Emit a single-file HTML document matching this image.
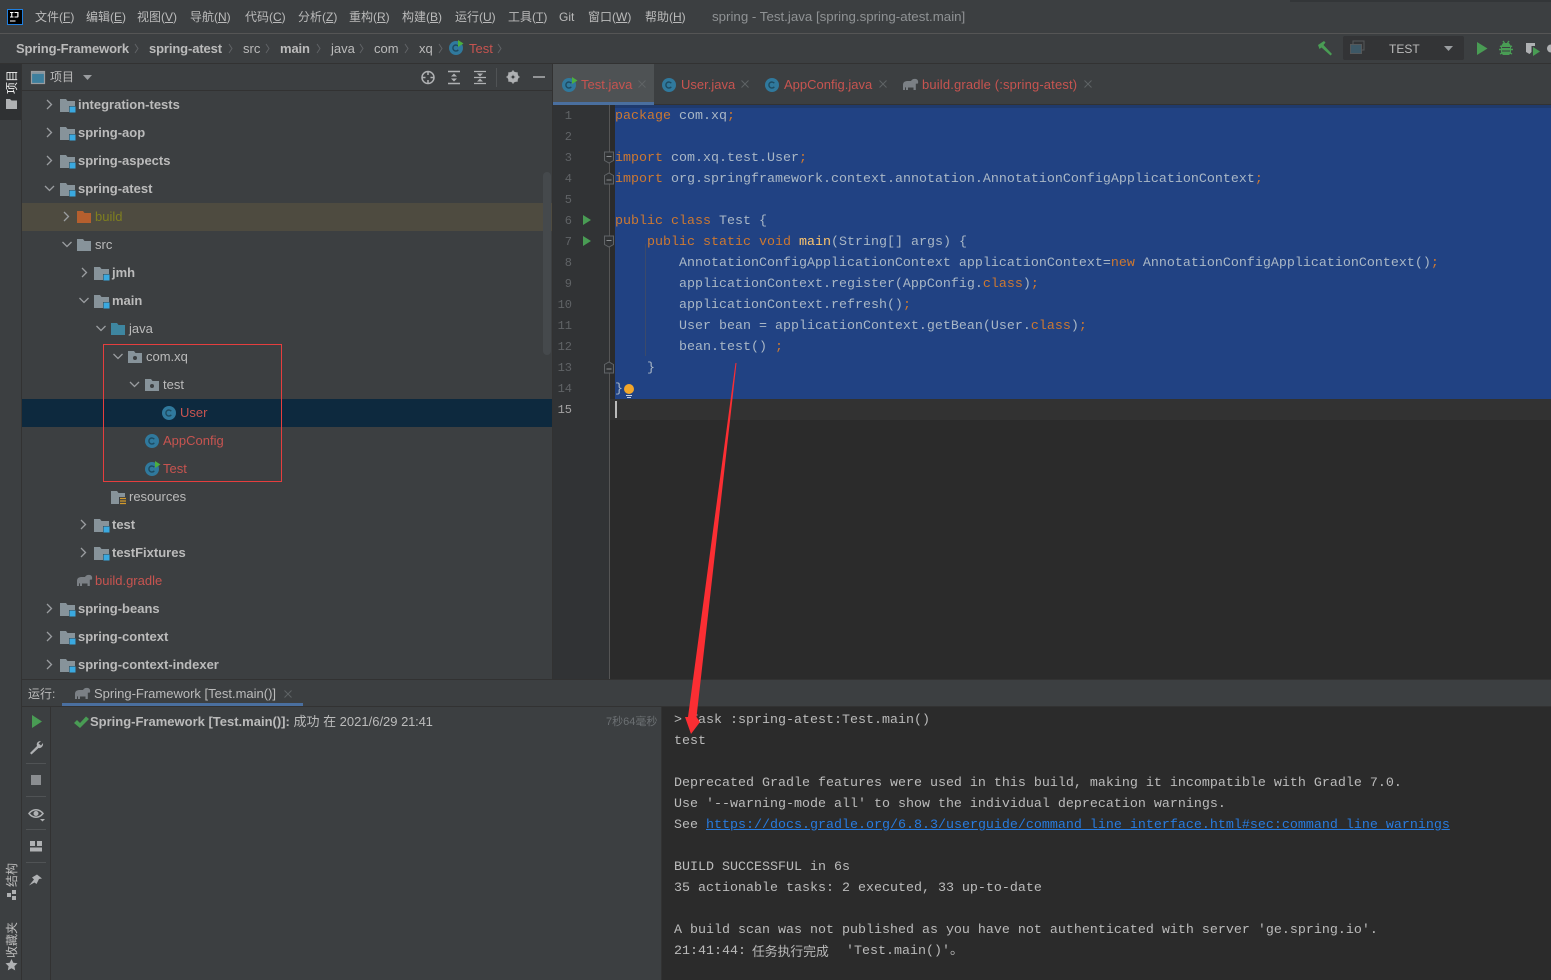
<!DOCTYPE html>
<html><head><meta charset="utf-8"><style>
html,body{margin:0;padding:0;background:#3c3f41}
body{position:relative;width:1551px;height:980px;overflow:hidden;font-family:"Liberation Sans","Noto Sans CJK SC",sans-serif;font-size:13px;color:#bbb}
.b{position:absolute}
.t{position:absolute;white-space:pre;line-height:18px;height:18px}
.m{font-size:12px;color:#bbb}
.bc{top:40px;font-size:13px;color:#bbb}
.bd{font-weight:bold}
.bc.bd{letter-spacing:-.12px}
.r{color:#c75450}
.tr{font-size:13px;margin-top:1px}
.tb{font-size:13px}
.c{position:absolute;left:0;white-space:pre;font-family:"Liberation Mono","Noto Sans CJK SC",monospace;font-size:13.33px;line-height:21px;height:21px;color:#a9b7c6;margin-top:1px}
.k{color:#cc7832}
.o{position:absolute;white-space:pre;font-family:"Liberation Mono","Noto Sans CJK SC",monospace;font-size:13.33px;line-height:21px;height:21px;color:#bbb;left:674px;margin-top:1px}
.n{position:absolute;left:549px;width:23px;text-align:right;font-family:"Liberation Mono",monospace;font-size:12px;line-height:21px;color:#606366;margin-top:1px}
.v{position:absolute;white-space:pre;transform:rotate(-90deg);transform-origin:center;font-size:12px;line-height:14px;color:#bbb}
</style></head><body>
<!-- backgrounds -->
<div class="b" style="left:0;top:33px;width:1551px;height:1px;background:#555"></div>
<div class="b" style="left:0;top:63px;width:1551px;height:1px;background:#323232"></div>
<div class="b" style="left:1290px;top:0;width:261px;height:2px;background:#333638"></div>
<div class="b" style="left:21px;top:64px;width:1px;height:916px;background:#323232"></div>
<div class="b" style="left:0;top:64px;width:21px;height:56px;background:#2f3133"></div>
<div class="b" style="left:22px;top:90px;width:531px;height:1px;background:#323232"></div>
<div class="b" style="left:22px;top:203px;width:531px;height:28px;background:#4e4b40"></div>
<div class="b" style="left:22px;top:399px;width:531px;height:28px;background:#0d293e"></div>
<div class="b" style="left:543px;top:172px;width:8px;height:183px;background:#45494c;border-radius:4px"></div>
<div class="b" style="left:552px;top:64px;width:1px;height:616px;background:#323232"></div>
<!-- tabs -->
<div class="b" style="left:553px;top:64px;width:101px;height:38px;background:#4e5254"></div>
<div class="b" style="left:553px;top:102px;width:101px;height:3px;background:#4a6f9f"></div>
<div class="b" style="left:654px;top:104px;width:897px;height:1px;background:#323232"></div>
<!-- editor -->
<div class="b" style="left:553px;top:105px;width:57px;height:575px;background:#313335"></div>
<div class="b" style="left:609px;top:105px;width:1px;height:575px;background:#555"></div>
<div class="b" style="left:610px;top:105px;width:941px;height:575px;background:#2b2b2b"></div>
<div class="b" style="top:105px;height:3px;background:#1f3a6d;left:615px;width:936px"></div>
<div class="b" style="left:615px;top:108px;width:936px;height:291px;background:#214283"></div>
<div class="b" style="left:610px;top:399px;width:941px;height:21px;background:#323232"></div>
<div class="b" style="left:615px;top:401px;width:2px;height:17px;background:#bbb"></div>
<div class="b" style="left:645px;top:244px;width:1px;height:112px;background:#3b4a6b"></div>
<!-- run panel -->
<div class="b" style="left:22px;top:679px;width:1529px;height:1px;background:#323232"></div>
<div class="b" style="left:22px;top:706px;width:1529px;height:1px;background:#323232"></div>
<div class="b" style="left:62px;top:703px;width:241px;height:3px;background:#4a6f9f"></div>
<div class="b" style="left:50px;top:707px;width:1px;height:273px;background:#323232"></div>
<div class="b" style="left:661px;top:707px;width:1px;height:273px;background:#323232"></div>
<div class="b" style="left:662px;top:707px;width:889px;height:273px;background:#2b2b2b"></div>
<div class="b" style="left:1343px;top:36px;width:121px;height:24px;background:#333436;border-radius:2px"></div>

<!-- menu -->
<span class="t m" style="left:35px;top:8px">文件(<u>F</u>)</span>
<span class="t m" style="left:86px;top:8px">编辑(<u>E</u>)</span>
<span class="t m" style="left:137px;top:8px">视图(<u>V</u>)</span>
<span class="t m" style="left:190px;top:8px">导航(<u>N</u>)</span>
<span class="t m" style="left:245px;top:8px">代码(<u>C</u>)</span>
<span class="t m" style="left:298px;top:8px">分析(<u>Z</u>)</span>
<span class="t m" style="left:349px;top:8px">重构(<u>R</u>)</span>
<span class="t m" style="left:402px;top:8px">构建(<u>B</u>)</span>
<span class="t m" style="left:455px;top:8px">运行(<u>U</u>)</span>
<span class="t m" style="left:508px;top:8px">工具(<u>T</u>)</span>
<span class="t m" style="left:559px;top:8px">Git</span>
<span class="t m" style="left:588px;top:8px">窗口(<u>W</u>)</span>
<span class="t m" style="left:645px;top:8px">帮助(<u>H</u>)</span>
<span class="t m" style="left:712px;top:8px;color:#8f9294;font-size:13.3px">spring - Test.java [spring.spring-atest.main]</span>

<!-- breadcrumb -->
<span class="t bc bd" style="left:16px">Spring-Framework</span>
<span class="t bc bd" style="left:149px">spring-atest</span>
<span class="t bc" style="left:243px">src</span>
<span class="t bc bd" style="left:280px">main</span>
<span class="t bc" style="left:331px">java</span>
<span class="t bc" style="left:374px">com</span>
<span class="t bc" style="left:419px">xq</span>
<span class="t bc r" style="left:469px">Test</span>
<span class="t" style="left:1389px;top:40px;font-size:12px">TEST</span>

<!-- project toolbar -->
<span class="t" style="left:50px;top:68px;font-size:12px">项目</span>

<!-- tree -->
<span class="t tr bd" style="left:78px;top:95px">integration-tests</span>
<span class="t tr bd" style="left:78px;top:123px">spring-aop</span>
<span class="t tr bd" style="left:78px;top:151px">spring-aspects</span>
<span class="t tr bd" style="left:78px;top:179px">spring-atest</span>
<span class="t tr" style="left:95px;top:207px;color:#7f7f1f">build</span>
<span class="t tr" style="left:95px;top:235px">src</span>
<span class="t tr bd" style="left:112px;top:263px">jmh</span>
<span class="t tr bd" style="left:112px;top:291px">main</span>
<span class="t tr" style="left:129px;top:319px">java</span>
<span class="t tr" style="left:146px;top:347px">com.xq</span>
<span class="t tr" style="left:163px;top:375px">test</span>
<span class="t tr r" style="left:180px;top:403px">User</span>
<span class="t tr r" style="left:163px;top:431px">AppConfig</span>
<span class="t tr r" style="left:163px;top:459px">Test</span>
<span class="t tr" style="left:129px;top:487px">resources</span>
<span class="t tr bd" style="left:112px;top:515px">test</span>
<span class="t tr bd" style="left:112px;top:543px">testFixtures</span>
<span class="t tr r" style="left:95px;top:571px">build.gradle</span>
<span class="t tr bd" style="left:78px;top:599px">spring-beans</span>
<span class="t tr bd" style="left:78px;top:627px">spring-context</span>
<span class="t tr bd" style="left:78px;top:655px">spring-context-indexer</span>

<!-- editor tabs -->
<span class="t tb r" style="left:581px;top:76px">Test.java</span>
<span class="t tb r" style="left:681px;top:76px">User.java</span>
<span class="t tb r" style="left:784px;top:76px">AppConfig.java</span>
<span class="t tb r" style="left:922px;top:76px;letter-spacing:.15px">build.gradle (:spring-atest)</span>

<!-- line numbers -->
<div class="n" style="top:105px">1</div>
<div class="n" style="top:126px">2</div>
<div class="n" style="top:147px">3</div>
<div class="n" style="top:168px">4</div>
<div class="n" style="top:189px">5</div>
<div class="n" style="top:210px">6</div>
<div class="n" style="top:231px">7</div>
<div class="n" style="top:252px">8</div>
<div class="n" style="top:273px">9</div>
<div class="n" style="top:294px">10</div>
<div class="n" style="top:315px">11</div>
<div class="n" style="top:336px">12</div>
<div class="n" style="top:357px">13</div>
<div class="n" style="top:378px">14</div>
<div class="n" style="top:399px;color:#a4a3a3">15</div>

<!-- code -->
<div class="b" style="left:615px;top:0">
<div class="c" style="top:105px"><span class="k">package</span> com.xq<span class="k">;</span></div>
<div class="c" style="top:147px"><span class="k">import</span> com.xq.test.User<span class="k">;</span></div>
<div class="c" style="top:168px"><span class="k">import</span> org.springframework.context.annotation.AnnotationConfigApplicationContext<span class="k">;</span></div>
<div class="c" style="top:210px"><span class="k">public class</span> Test {</div>
<div class="c" style="top:231px">    <span class="k">public static void</span> <span style="color:#ffc66d">main</span>(String[] args) {</div>
<div class="c" style="top:252px">        AnnotationConfigApplicationContext applicationContext=<span class="k">new</span> AnnotationConfigApplicationContext()<span class="k">;</span></div>
<div class="c" style="top:273px">        applicationContext.register(AppConfig.<span class="k">class</span>)<span class="k">;</span></div>
<div class="c" style="top:294px">        applicationContext.refresh()<span class="k">;</span></div>
<div class="c" style="top:315px">        User bean = applicationContext.getBean(User.<span class="k">class</span>)<span class="k">;</span></div>
<div class="c" style="top:336px">        bean.test() <span class="k">;</span></div>
<div class="c" style="top:357px">    }</div>
<div class="c" style="top:378px">}</div>
</div>

<!-- run -->
<span class="t" style="left:28px;top:685px;font-size:12px">运行:</span>
<span class="t" style="left:94px;top:685px;font-size:13px">Spring-Framework [Test.main()]</span>
<span class="t" style="left:90px;top:713px;font-size:13px"><b>Spring-Framework [Test.main()]:</b> 成功 在 2021/6/29 <span style="letter-spacing:-.2px">21:41</span></span>
<span class="t" style="left:606px;top:713px;font-size:11px;color:#6c7073">7秒64毫秒</span>

<!-- console -->
<div class="o" style="top:709px">&gt; Task :spring-atest:Test.main()</div>
<div class="o" style="top:730px">test</div>
<div class="o" style="top:772px">Deprecated Gradle features were used in this build, making it incompatible with Gradle 7.0.</div>
<div class="o" style="top:793px">Use '--warning-mode all' to show the individual deprecation warnings.</div>
<div class="o" style="top:814px">See <span style="color:#287bde;text-decoration:underline">https://docs.gradle.org/6.8.3/userguide/command_line_interface.html#sec:command_line_warnings</span></div>
<div class="o" style="top:856px">BUILD SUCCESSFUL in 6s</div>
<div class="o" style="top:877px">35 actionable tasks: 2 executed, 33 up-to-date</div>
<div class="o" style="top:919px">A build scan was not published as you have not authenticated with server 'ge.spring.io'.</div>
<div class="o" style="top:940px">21:41:44: </div>
<div class="o" style="top:940px;margin-top:0;left:752px;font-size:12.8px;font-family:'Noto Sans CJK SC',sans-serif">任务执行完成</div>
<div class="o" style="top:940px;left:846px">'Test.main()'。</div>

<!-- vertical labels -->
<span class="v" style="left:1px;top:76px;width:22px;text-align:center;color:#eee">项目</span>
<span class="v" style="left:1px;top:869px;width:22px;text-align:center">结构</span>
<span class="v" style="left:-6px;top:933px;width:36px;text-align:center">收藏夹</span>

<!-- icons -->
<svg class="b" style="left:0;top:0" width="1551" height="980" viewBox="0 0 1551 980" xmlns="http://www.w3.org/2000/svg">
<defs>
<g id="cr"><path d="M-2 -4.5L2.5 0L-2 4.5" fill="none" stroke="#9a9da0" stroke-width="1.3"/></g>
<g id="cd"><path d="M-4.5 -2L0 2.5L4.5 -2" fill="none" stroke="#9a9da0" stroke-width="1.3"/></g>
<g id="mod"><path d="M0 0h6l1.5 2H15v5H9v6H0z" fill="#87939a"/><rect x="9.5" y="7.5" width="6" height="6" fill="#3aa9e0"/></g>
<g id="pk"><path d="M0 0h6l1.5 2H14v10H0z" fill="#87939a"/><circle cx="7" cy="7" r="2" fill="#3c3f41"/></g>
<g id="cl"><circle cx="7" cy="7" r="7" fill="#30799d"/><path d="M9.3 5.2A3 3 0 1 0 9.3 8.8" fill="none" stroke="#1d4a60" stroke-width="1.4"/></g>
<g id="rm"><path d="M0 0L5.5 3.5L0 7z" fill="#4caf3f"/></g>
<g id="el"><path d="M1 12V7C1 4 3 3 6 3h3c1-2 3-2.500 5-2 2 .5 2.500 2.500 2 4.500l-2.200 .3V12h-2.300V9.500H6V12H4V9.300L3 9.500V12z" fill="#7b8085"/></g>
<g id="x"><path d="M-3.500 -3.500L3.500 3.500M3.500 -3.500L-3.500 3.500" stroke="#5f6365" stroke-width="1"/></g>
<g id="fold"><path d="M0 2.500L4.500 0L9 2.500V11H0z" fill="#313335" stroke="#606366"/><path d="M2 7h5" stroke="#8a8d90"/></g>
<g id="foldu"><path d="M0 0H9V8.500L4.500 11L0 8.500z" fill="#313335" stroke="#606366"/><path d="M2 4.500h5" stroke="#8a8d90"/></g>
</defs>

<!-- logo -->
<rect x="7.500" y="9.500" width="15" height="15" fill="#000" stroke="#1f7fe0"/>
<path d="M10 12h3.500v1h-1.200v3.500h1.200v1H10v-1h1.200V13H10zM14.500 12h4v4.500c0 .8-.5 1-1.200 1H14.500v-1h2.800V13h-2.800zM10 20.500h5.500v1H10z" fill="#fff"/>

<!-- breadcrumb separators -->
<g fill="none" stroke="#606366" stroke-width="1">
<path d="M135 44l3 4.500-3 4.500M229 44l3 4.500-3 4.500M266 44l3 4.500-3 4.500M317 44l3 4.500-3 4.500M360 44l3 4.500-3 4.500M405 44l3 4.500-3 4.500M439 44l3 4.500-3 4.500M498 44l3 4.500-3 4.500"/>
</g>
<use href="#cl" x="449" y="41"/><use href="#rm" x="458" y="40"/>

<!-- right toolbar -->
<path d="M1318 45l6-4 1.500 1.500-2 2.500 8.500 9-1.500 1.500-9-8-2 1.500z" fill="#499c54"/>
<rect x="1353" y="41" width="11" height="9" fill="none" stroke="#55585a"/><rect x="1350.500" y="44.500" width="11" height="9" fill="#3d5866" stroke="#55585a"/>
<path d="M1444 46h9l-4.500 5z" fill="#9a9da0"/>
<path d="M1477 42l10.500 6.500L1477 55z" fill="#499c54"/>
<path d="M1503 43h6l2 3v7l-2 2h-6l-2-2v-7z" fill="#499c54"/><path d="M1500 46l2 1M1512 46l-2 1M1499 49.500h14M1500 54l2-1M1512 54l-2-1M1503 41l1.500 2M1509 41l-1.500 2" stroke="#499c54" stroke-width="1.400"/><path d="M1502 47.500h8M1502 51h8" stroke="#3c3f41"/>
<path d="M1526 43h9v3h-3.500v6l-2 2-3.500-2z" fill="#afb1b3"/><path d="M1533 47l7 4.500-7 4.500z" fill="#499c54"/>
<path d="M1551 44.500a4 4 0 0 0 0 8z" fill="#afb1b3"/>

<!-- project toolbar -->
<rect x="31.500" y="71.500" width="13" height="12" fill="#3d7f9e" stroke="#9a9da0" stroke-width="1.200"/>
<path d="M32 73h12" stroke="#9a9da0" stroke-width="1.500"/>
<path d="M83 75h9l-4.500 5z" fill="#9a9da0"/>
<circle cx="428" cy="77.500" r="6" fill="none" stroke="#afb1b3" stroke-width="1.500"/><path d="M428 71v4M428 80v4M421.500 77.500h4M430.500 77.500h4" stroke="#afb1b3" stroke-width="1.500"/>
<path d="M448 71.500h12M448 83.500h12" stroke="#afb1b3" stroke-width="1.500"/><path d="M454 73.500l-3 3h6zM454 81.500l-3-3h6z" fill="#afb1b3"/>
<path d="M474 71.500h12M474 83.500h12M474 77.500h12" stroke="#afb1b3" stroke-width="1.300"/><path d="M480 76.500l-3-3h6zM480 78.500l-3 3h6z" fill="#afb1b3"/>
<path d="M496.500 68v19" stroke="#505355"/>
<circle cx="513" cy="77" r="4" fill="none" stroke="#afb1b3" stroke-width="3"/><path d="M513 70.500v13M506.500 77h13M508.500 72.500l9 9M517.500 72.500l-9 9" stroke="#afb1b3" stroke-width="1.600"/><circle cx="513" cy="77" r="1.500" fill="#3c3f41"/>
<path d="M533 77h12" stroke="#afb1b3" stroke-width="1.500"/>

<!-- left strip -->
<path d="M6 99h4l1.500 1.500H17V109H6z" fill="#afb1b3"/>
<path d="M7 891h4v4H7zM12 888h4v4h-4zM12 894h4v4h-4z" fill="#afb1b3" transform="translate(0 2)"/>
<path d="M11.500 959l1.800 3.800 4.200.5-3.100 2.900.8 4.200-3.700-2.100-3.700 2.100.8-4.200-3.100-2.900 4.200-.5z" fill="#afb1b3"/>

<!-- tree chevrons -->
<use href="#cr" x="49" y="104.500"/><use href="#cr" x="49" y="132.500"/><use href="#cr" x="49" y="160.500"/><use href="#cd" x="49.500" y="188"/>
<use href="#cr" x="66" y="216.500"/><use href="#cd" x="67" y="244"/><use href="#cr" x="84" y="272.500"/><use href="#cd" x="84" y="300"/>
<use href="#cd" x="101" y="328"/><use href="#cd" x="118" y="356"/><use href="#cd" x="134.500" y="384"/>
<use href="#cr" x="83" y="524.500"/><use href="#cr" x="83" y="552.500"/>
<use href="#cr" x="49" y="608.500"/><use href="#cr" x="49" y="636.500"/><use href="#cr" x="49" y="664.500"/>

<!-- tree icons -->
<use href="#mod" x="60" y="99"/><use href="#mod" x="60" y="127"/><use href="#mod" x="60" y="155"/><use href="#mod" x="60" y="183"/>
<path d="M77 211h6l1.500 2H91v10H77z" fill="#b55f2e"/>
<path d="M77 239h6l1.500 2H91v10H77z" fill="#87939a"/>
<use href="#mod" x="94" y="267"/><use href="#mod" x="94" y="295"/>
<path d="M111 323h6l1.500 2H125v10h-14z" fill="#3e86a0"/>
<use href="#pk" x="128" y="351"/><use href="#pk" x="145" y="379"/>
<use href="#cl" x="162" y="406"/><use href="#cl" x="145" y="434"/><use href="#cl" x="145" y="462"/><use href="#rm" x="155" y="461"/>
<path d="M111 491h6l1.500 2H125v4h-6v7h-8z" fill="#87939a"/><path d="M120 498.500h6M120 501h6M120 503.500h6" stroke="#d39a2b" stroke-width="1.200"/>
<use href="#mod" x="94" y="519"/><use href="#mod" x="94" y="547"/>
<use href="#el" x="76" y="574"/>
<use href="#mod" x="60" y="603"/><use href="#mod" x="60" y="631"/><use href="#mod" x="60" y="659"/>

<!-- tab icons -->
<use href="#cl" x="562" y="78"/><use href="#rm" x="572" y="77"/><use href="#x" x="642" y="84"/>
<use href="#cl" x="662" y="78"/><use href="#x" x="745" y="84"/>
<use href="#cl" x="765" y="78"/><use href="#x" x="883" y="84"/>
<use href="#el" x="902" y="78"/><use href="#x" x="1088" y="84"/>

<!-- gutter -->
<path d="M583 215l8 5-8 5z" fill="#499c54"/><path d="M583 236l8 5-8 5z" fill="#499c54"/>
<use href="#foldu" x="604.500" y="152"/><use href="#fold" x="604.500" y="173"/>
<use href="#foldu" x="604.500" y="236"/><use href="#fold" x="604.500" y="362"/>

<!-- bulb -->
<circle cx="629" cy="389" r="5" fill="#f2a62b"/><path d="M626 395.500h6M627 397.500h4" stroke="#c8d0dc"/>

<!-- run bar -->
<use href="#el" x="74" y="687"/><use href="#x" x="288" y="694"/>
<path d="M32 715l10 6.500L32 728z" fill="#499c54"/>
<path d="M30 753l7-7c-1-3 1-5 4-5l-2.500 2.500 2.500 2 2-2.500c.5 3-1.500 5.500-4.500 5l-7 6.500z" fill="#afb1b3"/>
<path d="M26 763.500h20M26 796.500h20M26 829.500h20M26 862.500h20" stroke="#505355"/>
<rect x="31" y="775" width="10" height="10" fill="#8a8d90"/>
<path d="M29 813.500c4-5 10-5 14 0-4 5-10 5-14 0z" fill="none" stroke="#afb1b3" stroke-width="1.500"/><circle cx="36" cy="813.500" r="2.500" fill="#afb1b3"/><path d="M40 819h5l-2.500 2.500z" fill="#afb1b3"/>
<path d="M30 841h5v5h-5zM37 841h5v5h-5zM30 847.500h12v4H30z" fill="#afb1b3"/>
<path d="M29 885.500l5-6-2-2 5-3 5 4-3 .5-2.500 5-2-1.500z" fill="#afb1b3"/>
<path d="M74 723l3-3 3 3 6-6.500 3 2.500-9 9z" fill="#499c54"/>

<!-- red box -->
<rect x="103.500" y="344.500" width="178" height="137" fill="none" stroke="#e53e3e"/>

<!-- arrow -->
<path d="M735.500 363L736.500 363L696.500 717L700 722L691 734L685 717L688 717Z" fill="#fb2e33"/>
</svg>
</body></html>
